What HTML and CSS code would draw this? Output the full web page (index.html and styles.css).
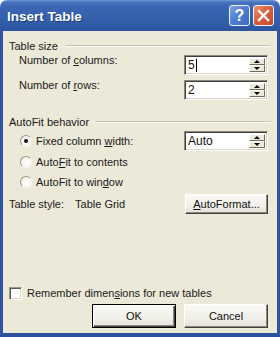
FILE: index.html
```html
<!DOCTYPE html>
<html>
<head>
<meta charset="utf-8">
<link rel="stylesheet" href="styles.css">
</head>
<body>
<div class="window">
  <div class="titlebar">
    <span class="title">Insert Table</span>
    <div class="tbtn help">?</div>
    <div class="tbtn close">
      <svg width="13" height="13" viewBox="0 0 13 13"><path d="M2 2 L11 11 M11 2 L2 11" stroke="#fff" stroke-width="2.4" stroke-linecap="square"/></svg>
    </div>
  </div>
  <div class="body">
    <div class="group g1"><span>Table size</span><div class="line"></div></div>
    <div class="row r-cols">
      <span class="lbl ind">Number of <u>c</u>olumns:</span>
      <div class="spin"><span class="val">5<span class="caret"></span></span><div class="arrows"><div class="ab"><i class="up"></i></div><div class="ab"><i class="down"></i></div></div></div>
    </div>
    <div class="row r-rows">
      <span class="lbl ind">Number of <u>r</u>ows:</span>
      <div class="spin"><span class="val">2</span><div class="arrows"><div class="ab"><i class="up"></i></div><div class="ab"><i class="down"></i></div></div></div>
    </div>
    <div class="group g2"><span>AutoFit behavior</span><div class="line l2"></div></div>
    <div class="row radio-row rr1">
      <span class="radio on"></span><span class="rtext">Fixed column <u>w</u>idth:</span>
      <div class="spin"><span class="val">Auto</span><div class="arrows"><div class="ab"><i class="up"></i></div><div class="ab"><i class="down"></i></div></div></div>
    </div>
    <div class="row radio-row rr2">
      <span class="radio"></span><span class="rtext">Auto<u>F</u>it to contents</span>
    </div>
    <div class="row radio-row rr3">
      <span class="radio"></span><span class="rtext">AutoFit to win<u>d</u>ow</span>
    </div>
    <div class="row r-style">
      <span class="st1">Table style:</span><span class="st2">Table Grid</span>
      <div class="btn fmt"><u>A</u>utoFormat...</div>
    </div>
    <div class="row r-check">
      <span class="check"></span><span class="ctext">Remember dimen<u>s</u>ions for new tables</span>
    </div>
    <div class="row r-btns">
      <div class="btn ok default">OK</div>
      <div class="btn cancel">Cancel</div>
    </div>
  </div>
</div>
</body>
</html>
```
FILE: styles.css
```css
html, body {
  margin: 0;
  padding: 0;
  background: #ffffff;
}
.window {
  width: 280px;
  height: 337px;
  display: flex;
  flex-direction: column;
  font-family: "Liberation Sans", Arial, sans-serif;
  font-size: 11px;
  color: #1a1a1a;
}
.titlebar {
  height: 31px;
  flex: none;
  display: flex;
  align-items: center;
  padding: 0 6px 0 7px;
  box-sizing: border-box;
  border-radius: 7px 7px 0 0;
  background: linear-gradient(to bottom, #6f95d6 0, #4a76c2 2px, #3a66b4 6px, #3561ad 50%, #2f5aa5 85%, #2c55a0 100%);
}
.title {
  flex: 1;
  color: #fff;
  font-weight: bold;
  font-size: 13.5px;
  text-shadow: 1px 1px 0 #1d3c7a;
  margin-top: 1px;
}
.tbtn {
  width: 21px;
  height: 21px;
  box-sizing: border-box;
  border: 1px solid #eef2fa;
  border-radius: 3px;
  display: flex;
  align-items: center;
  justify-content: center;
}
.help {
  margin-right: 3px;
  background: linear-gradient(135deg, #7ea3e4 0, #4f7fd0 45%, #3c6ac0 100%);
  color: #fff;
  font-weight: bold;
  font-size: 16px;
}
.close {
  background: linear-gradient(135deg, #ec9374 0, #d9603c 45%, #c7482a 100%);
}
.body {
  flex: 1;
  background: #ece9d8;
  border-left: 3px solid #2d56a2;
  border-right: 3px solid #2d56a2;
  border-bottom: 4px solid #2a50a0;
  padding: 0 9px 5px 6px;
  display: flex;
  flex-direction: column;
}
.group {
  height: 14px;
  display: flex;
  align-items: center;
  margin-right: -3px;
}
.g1 { margin-top: 8px; }
.g2 { margin-top: 15px; }
.line {
  flex: 1;
  margin-left: 8px;
  border-top: 1px solid #c4c0b2;
  border-bottom: 1px solid #fdfdfb;
}
.line.l2 { margin-left: 7px; }
.row {
  display: flex;
  align-items: center;
  height: 20px;
}
.r-cols { margin-top: 2px; align-items: flex-start; }
.r-rows { margin-top: 5px; align-items: flex-start; }
.lbl {
  line-height: 13px;
  margin-top: -1px;
}
.ind { margin-left: 10px; }
.spin {
  margin-left: auto;
  width: 84px;
  height: 20px;
  box-sizing: border-box;
  background: #fff;
  border: 1px solid;
  border-color: #8a877c #ffffff #ffffff #8a877c;
  box-shadow: inset 1px 1px 0 #3f3f3f, inset -1px -1px 0 #d8d5c8;
  display: flex;
}
.val {
  flex: 1;
  padding-left: 3px;
  line-height: 18px;
  font-size: 12px;
  color: #111;
  display: flex;
  align-items: center;
}
.caret {
  display: inline-block;
  width: 1px;
  height: 13px;
  background: #000;
  margin-left: 1px;
}
.arrows {
  width: 16px;
  margin: 2px 2px 2px 0;
  display: flex;
  flex-direction: column;
}
.ab {
  flex: 1;
  box-sizing: border-box;
  background: #ece9d8;
  border: 1px solid;
  border-color: #ffffff #6e6c64 #6e6c64 #ffffff;
  display: flex;
  align-items: center;
  justify-content: center;
}
.up {
  width: 0;
  height: 0;
  border-left: 3px solid transparent;
  border-right: 3px solid transparent;
  border-bottom: 3px solid #000;
}
.down {
  width: 0;
  height: 0;
  border-left: 3px solid transparent;
  border-right: 3px solid transparent;
  border-top: 3px solid #000;
}
.rr1 { margin-top: 2px; }
.rr2 { margin-top: 1px; }
.radio {
  margin-left: 11px;
  width: 12px;
  height: 12px;
  box-sizing: border-box;
  border-radius: 50%;
  border: 1px solid;
  border-color: #9a978c #f4f3ee #f4f3ee #9a978c;
  background: radial-gradient(circle at 60% 60%, #ffffff 0, #f2f1ea 70%, #dcd9cc 100%);
  display: flex;
  align-items: center;
  justify-content: center;
}
.radio.on::after {
  content: "";
  width: 4px;
  height: 4px;
  border-radius: 50%;
  background: #111;
}
.rtext {
  margin-left: 4px;
}
.r-style { margin-top: 2px; }
.st2 { margin-left: 11px; }
.btn {
  box-sizing: border-box;
  display: flex;
  align-items: center;
  justify-content: center;
  background: linear-gradient(to bottom, #faf9f5 0, #f0efe8 60%, #e4e2d8 100%);
  border: 1px solid;
  border-color: #ffffff #404040 #404040 #ffffff;
  box-shadow: inset -1px -1px 0 #8a877c;
  color: #111;
}
.fmt {
  margin-left: auto;
  width: 83px;
  height: 20px;
}
.r-check {
  margin-top: 72px;
  height: 14px;
}
.check {
  width: 13px;
  height: 13px;
  box-sizing: border-box;
  background: #fff;
  border: 1px solid;
  border-color: #9a978c #ffffff #ffffff #9a978c;
  box-shadow: inset 1px 1px 0 #5a5a5a, inset -1px -1px 0 #dcd9cc;
}
.ctext {
  margin-left: 5px;
}
.r-btns {
  margin-top: 4px;
  height: 24px;
  justify-content: flex-end;
  gap: 8px;
}
.ok, .cancel {
  width: 84px;
  height: 24px;
}
.default {
  border: 1px solid #000;
  box-shadow: inset 1px 1px 0 #ffffff, inset -1px -1px 0 #404040, inset -2px -2px 0 #8a877c;
}
```
